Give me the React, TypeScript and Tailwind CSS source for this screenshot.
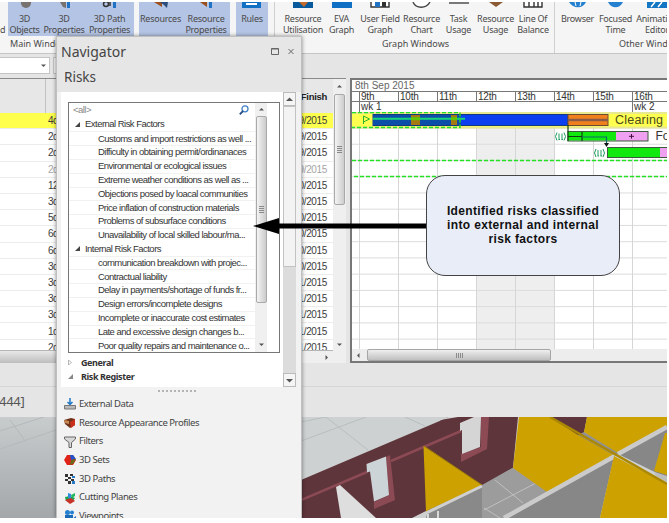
import React from 'react';
import clsx from 'clsx';

interface RibbonItem {
  lines: string[];
  width: string;
  icon?: React.ReactNode;
}

const durations = ['4d', '2d', '2d', '2d', '12d', '3d', '5d', '6d', '6d', '3d', '3d', '3d', '3d', '1d', '2d'];
const finishes = ['09', '09', '09', '09', '10', '10', '10', '10', '10', '10', '11', '11', '11', '11', '11'];
const days = ['9th', '10th', '11th', '12th', '13th', '14th', '15th', '16th'];

const externalRisks = [
  'Customs and import restrictions as well ...',
  'Difficulty in obtaining permit/ordinanaces',
  'Environmental or ecological issues',
  'Extreme weather conditions as well as ...',
  'Objections posed by loacal communities',
  'Price inflation of construction materials',
  'Problems of subsurface conditions',
  'Unavailability of local skilled labour/ma...',
];

const internalRisks = [
  'communication breakdown with projec...',
  'Contractual liability',
  'Delay in payments/shortage of funds fr...',
  'Design errors/incomplete designs',
  'Incomplete or inaccurate cost estimates',
  'Late and excessive design changes b...',
  'Poor quality repairs and maintenance o...',
];

// Only the bottom few pixels of the ribbon icons are visible
const Stub = ({ children }: { children: React.ReactNode }) => (
  <svg className="h-[6px] w-[22px]" viewBox="0 0 22 6">{children}</svg>
);

const view3d: RibbonItem[] = [
  { lines: ['3D', 'Objects'], width: 'w-[33px]', icon: <Stub><circle cx="12" cy="1" r="5" fill="#77716f" /></Stub> },
  { lines: ['3D', 'Properties'], width: 'w-[46px]', icon: <Stub><path d="M7 0h6v6l-3-1z" fill="#77716f" /><path d="M14 0h3v6h-3z" fill="#1f72c4" /></Stub> },
  { lines: ['3D Path', 'Properties'], width: 'w-[45px]', icon: <Stub><circle cx="7" cy="2" r="2.5" fill="none" stroke="#333" strokeWidth="1.5" /><path d="M11 0v4" stroke="#333" strokeWidth="1.5" /><path d="M14 0h3v6h-3z" fill="#1f72c4" /></Stub> },
];

const viewResources: RibbonItem[] = [
  { lines: ['Resources'], width: 'w-[43px]', icon: <Stub><path d="M4 0h8v5z" fill="#9a4f1e" /><path d="M10 0l8 0-1 6-3-3z" fill="#2a4d7c" /></Stub> },
  { lines: ['Resource', 'Properties'], width: 'w-[48px]', icon: <Stub><path d="M5 0h7v5z" fill="#9a4f1e" /><path d="M14 0h3v6h-3z" fill="#1f72c4" /></Stub> },
];

const graphItems: RibbonItem[] = [
  { lines: ['Resource', 'Utilisation'], width: 'w-[44px]', icon: <Stub><path d="M1 0h20v6H1z" fill="#075a9c" /><path d="M7 0h9l-4 5z" fill="#c46b2c" /></Stub> },
  { lines: ['EVA', 'Graph'], width: 'w-[33px]', icon: <Stub><path d="M1 0h20v6H1z" fill="#0f70c4" /></Stub> },
  { lines: ['User Field', 'Graph'], width: 'w-[44px]', icon: <Stub><path d="M2 0v5h18V0" fill="#fff" stroke="#333" strokeWidth="1.4" /><path d="M6 0h5v5H6z" fill="#1f72c4" /><path d="M13 0h4v5h-4z" fill="#333" /></Stub> },
  { lines: ['Resource', 'Chart'], width: 'w-[39px]', icon: <Stub><path d="M2 0c3 7 13 7 17 0" fill="#fff" stroke="#444" strokeWidth="1.4" /></Stub> },
  { lines: ['Task', 'Usage'], width: 'w-[35px]', icon: <Stub><path d="M1 1h20" stroke="#444" strokeWidth="1.4" /></Stub> },
  { lines: ['Resource', 'Usage'], width: 'w-[39px]', icon: <Stub><path d="M4 0h14l-7 5z" fill="#8b5a35" /></Stub> },
  { lines: ['Line Of', 'Balance'], width: 'w-[36px]', icon: <Stub><path d="M2 0v5h18V0M7 0v5M12 0v5M16 0v5" fill="#fff" stroke="#333" strokeWidth="1.4" /></Stub> },
];

const otherItems: RibbonItem[] = [
  { lines: ['Browser'], width: 'w-[37px]', icon: <Stub><path d="M2 0h17c-3 7-13 7-17 0z" fill="#2581cf" /><path d="M8 0l1 4M14 0l-1 4" stroke="#fff" /></Stub> },
  { lines: ['Focused', 'Time'], width: 'w-[39px]', icon: <Stub><path d="M3 0h15c-3 7-12 7-15 0z" fill="#2581cf" /></Stub> },
  { lines: ['Animation', 'Editor'], width: 'w-[44px]', icon: <Stub><path d="M1 0h21v6H1z" fill="#1377c4" /><path d="M5 5l4-5M12 5l4-5" stroke="#fff" strokeWidth="1.5" /></Stub> },
];

const RibbonButtons = ({ items }: { items: RibbonItem[] }) => (
  <>
    {items.map((item, index) => (
      <div key={index} className={clsx('flex shrink-0 flex-col items-center whitespace-nowrap', item.width)}>
        {item.icon}
        <div className="mt-[6px] text-center text-[9px] leading-[10.5px] tracking-[-0.25px]">
          {item.lines.map((line) => (
            <div key={line} className="flex justify-center">{line}</div>
          ))}
        </div>
      </div>
    ))}
  </>
);

const Ribbon = () => (
  <div className="flex h-[52px] shrink-0 overflow-hidden border-b border-[#c6c6c6] bg-[#f5f5f5] text-[#4a4a4a]">
    <div className="flex w-[275px] shrink-0 flex-col border-r border-[#cfcfcf]">
      <div className="flex h-[34px]">
        <div className="flex w-[8px] items-start pt-[22px] text-[9px] leading-[11px]">d</div>
        <div className="flex w-[126px] bg-[#b4c4e4]"><RibbonButtons items={view3d} /></div>
        <div className="ml-[5px] flex w-[91px] bg-[#b4c4e4]"><RibbonButtons items={viewResources} /></div>
        <div className="ml-[6px] flex w-[32px] justify-center bg-[#b4c4e4]">
          <RibbonButtons
            items={[{ lines: ['Rules'], width: 'w-[32px]', icon: <Stub><path d="M1 0h19v6H1z" fill="#0f70c4" /><path d="M5 2h11" stroke="#fff" strokeWidth="2" /></Stub> }]}
          />
        </div>
      </div>
      <div className="pl-[10px] pt-[2px] text-[9px] leading-[12px]">Main Windows</div>
    </div>
    <div className="flex w-[280px] shrink-0 flex-col border-r border-[#cfcfcf]">
      <div className="flex h-[34px] pl-[6px]"><RibbonButtons items={graphItems} /></div>
      <div className="pl-[107px] pt-[2px] text-[9px] leading-[12px]">Graph Windows</div>
    </div>
    <div className="flex flex-col">
      <div className="flex h-[34px] pl-[4px]"><RibbonButtons items={otherItems} /></div>
      <div className="whitespace-nowrap pl-[64px] pt-[2px] text-[9px] leading-[12px]">Other Windows</div>
    </div>
  </div>
);

const Toolbar = () => (
  <div className="flex h-[24px] shrink-0 items-start bg-[#e5e5e5] pt-[3px]">
    <div className="flex h-[17px] w-[50px] items-center justify-end border border-l-0 border-[#c4c4c4] bg-white pr-[3px]">
      <Arrow dir="down" size={5} />
    </div>
    <div className="ml-[3px] h-[17px] w-[12px] border border-[#c4c4c4] bg-[#f2f2f2]" />
  </div>
);

const Arrow = ({ dir, size = 5 }: { dir: 'up' | 'down' | 'left' | 'right'; size?: number }) => {
  const paths = {
    up: 'M0 7L5 2l5 5z',
    down: 'M0 3l5 5 5-5z',
    left: 'M7 0L2 5l5 5z',
    right: 'M3 0l5 5-5 5z',
  };
  return <svg width={size} height={size} viewBox="0 0 10 10"><path d={paths[dir]} fill="#555" /></svg>;
};

const Grip = () => (
  <div className="flex flex-col gap-[1px]">
    {[0, 1, 2, 3].map((i) => <div key={i} className="h-[1px] w-[5px] bg-[#8a8a8a]" />)}
  </div>
);

const TaskTable = () => (
  <div className="flex h-[285px] w-[346px] shrink-0 border-t border-[#8a8a8a] bg-white font-['Liberation_Sans'] text-[10px] text-[#3c3c3c]">
    <div className="flex w-[333px] flex-col">
      <div className="flex h-[34px] shrink-0 bg-[#e7e7e7]">
        <div className="w-[46px] border-r border-[#c2c2c2]" />
        <div className="flex-1 pr-[6px] pt-[12px] text-right text-[9.5px] font-bold leading-[12px] tracking-[-0.3px] text-[#222]">Finish</div>
      </div>
      <div className="h-[237px] overflow-hidden">
        {durations.map((duration, index) => (
          <div
            key={index}
            className={clsx(
              'flex h-[16.2px] items-center justify-between border-b border-[#ececec] pl-[48px] pr-[6px]',
              index === 0 && 'bg-[#ffff4d]',
              index === 3 && 'text-[#a5a5a5]',
            )}
          >
            <span className="tracking-[-0.5px]">{duration}</span>
            <span className="text-[10px] tracking-[-0.35px]">{`12/${finishes[index]}/2015`}</span>
          </div>
        ))}
      </div>
      <div className="flex flex-1 items-center justify-between border-t border-[#b5b5b5] bg-[#efefef]">
        <div className="h-full w-[60px] bg-gradient-to-b from-[#e8e8e8] to-[#bdbdbd]" />
        <div className="pr-[4px]"><Arrow dir="right" /></div>
      </div>
    </div>
    <div className="flex flex-1 flex-col items-center bg-[#efefef]">
      <div className="flex h-[15px] items-center"><Arrow dir="up" /></div>
      <div className="flex h-[111px] w-[11px] items-center justify-center rounded-[2px] border border-[#a9a9a9] bg-gradient-to-r from-[#f4f4f4] to-[#cdcdcd]">
        <Grip />
      </div>
      <div className="flex flex-1 items-end pb-[16px]"><Arrow dir="down" /></div>
    </div>
  </div>
);

const GanttBody = () => {
  const columns = days.map((_, i) => 359.5 + i * 39);
  const rows = Array.from({ length: 14 }, (_, i) => 128 + i * 16.24);
  return (
    <svg className="h-[237px] w-[315px] shrink-0" viewBox="352 112 315 237">
      <rect x="352" y="112" width="315" height="237" fill="#fff" />
      <rect x="476.5" y="112" width="78" height="237" fill="#eee" />
      {rows.map((y) => <path key={y} d={`M352 ${y}H667`} stroke="#dcdcdc" />)}
      {columns.map((x) => <path key={x} d={`M${x} 112V349`} stroke="#d6d6d6" />)}
      <rect x="352" y="112" width="315" height="16" fill="#ffff50" />
      <path d="M352 127.5H667M352 113H667" stroke="#e7e890" strokeWidth="2" />
      {/* clearing task */}
      <rect x="373" y="114.5" width="195" height="11" fill="#0b3ff0" stroke="#123a80" />
      <rect x="373" y="115" width="88" height="10" fill="#0b4fa8" />
      <rect x="411" y="115" width="9" height="10" fill="#a57a12" />
      <rect x="451" y="115" width="6" height="10" fill="#a57a12" />
      <path d="M373 118.7H465" stroke="#16d47c" strokeWidth="2" />
      <path d="M411 118.7H420M451 118.7H457" stroke="#62c400" strokeWidth="3" />
      <rect x="568" y="114.5" width="40" height="11" fill="#f0801c" stroke="#6d4a32" />
      <path d="M568 120H608" stroke="#8a5a48" strokeWidth="2.5" />
      <path d="M363.5 124v-8l6 3-6 3" fill="none" stroke="#2bb52b" />
      <path d="M352 112.5H460V127.5H352" fill="none" stroke="#22e022" strokeWidth="1.4" strokeDasharray="4 2" />
      <text x="615" y="124" fontFamily="Liberation Sans" fontSize="12.5" fill="#4a4a1c" textLength="48">Clearing</text>
      {/* foundation task */}
      <rect x="568" y="131.5" width="80" height="9.5" fill="#f0a0f0" stroke="#3b5b3b" />
      <rect x="568" y="132" width="48" height="8.5" fill="#10e810" />
      <path d="M568 125v11.5H582M582 132v9M568 131.5v9.5" fill="none" stroke="#104010" strokeWidth="1.2" />
      <path d="M582 137H606.5V145" fill="none" stroke="#0b6a6a" strokeWidth="1.2" />
      <path d="M604 143h5l-2.5 4z" fill="#111" />
      <path d="M629 136.3h5M631.5 134v4.6" stroke="#401040" />
      <text x="655.5" y="140" fontFamily="Liberation Sans" fontSize="12" fill="#333">Foundation</text>
      {/* following task */}
      <rect x="607.5" y="147.5" width="62" height="10" fill="#f0a0f0" stroke="#3b5b3b" />
      <rect x="608" y="148" width="52" height="9" fill="#10e810" />
      {[[555, 136.5], [594, 153]].map(([x, y]) => (
        <g key={x} fill="none" stroke="#1f9d5c">
          <path d={`M${x + 2} ${y - 4}q-3 4 0 8M${x + 9} ${y - 4}q3 4 0 8M${x + 4} ${y - 3}v6M${x + 7} ${y - 3}v6M${x + 5} ${y + 3}h-1.5M${x + 8} ${y + 3}h-1.5`} />
        </g>
      ))}
      <path d="M352 160.4H667M354 176.4H667" stroke="#22e022" strokeWidth="1.5" strokeDasharray="4 2" />
    </svg>
  );
};

const Gantt = () => (
  <div className="ml-[4px] flex h-[285px] flex-1 flex-col overflow-hidden border-b-2 border-l-2 border-t-2 border-[#777] bg-white font-['Liberation_Sans'] text-[10px] leading-[11px] text-[#333]">
    <div className="h-[11px] shrink-0 pl-[3px] text-[10px] text-[#666]">8th Sep 2015</div>
    <div className="flex h-[11px] shrink-0 border-y border-[#777] pl-[7px] tracking-[-0.2px]">
      {days.map((day) => (
        <div key={day} className="w-[39px] shrink-0 border-l border-[#777] pl-[1px] leading-[10px]">{day}</div>
      ))}
    </div>
    <div className="flex h-[10px] shrink-0 pl-[7px] leading-[10px]">
      <div className="w-[273px] shrink-0 border-l border-[#777] pl-[1px]">wk 1</div>
      <div className="shrink-0 border-l border-[#777] pl-[1px]">wk 2</div>
    </div>
    <GanttBody />
    <div className="flex h-[12px] shrink-0 items-center bg-[#ededed] pl-[4px]">
      <Arrow dir="left" />
      <div className="ml-[6px] flex h-[12px] w-[184px] items-center justify-center rounded-[2px] border border-[#a6a6a6] bg-gradient-to-b from-[#efefef] to-[#bfbfbf]">
        <div className="rotate-90"><Grip /></div>
      </div>
    </div>
  </div>
);

const Scene = () => (
  <svg className="h-[101px] w-[366px] shrink-0" viewBox="301 417 366 101">
    <rect x="301" y="417" width="366" height="101" fill="#cdd1d1" />
    <path d="M301 441l65-24M326 417l42 33M301 422l25-5M405 417l20 9" stroke="#b9bebe" fill="none" />
    <path d="M301 480L449 417H518L513 468L482 486L424 512L412 518H301z" fill="#5e353b" />
    <path d="M440 421l8-4h26l-16 5-18 8z" fill="#5e353b" />
    <path d="M440 420l8-3h10z" fill="#d4d8d8" />
    <path d="M301 500l66-28M391 461l70-30" stroke="#8b4a54" strokeWidth="2.5" />
    <path d="M386 457l4-2 5 45-21 9v-7l15-7z" fill="#8b4a54" />
    <path d="M366.5 464l19.5-7.5 3 38.5-15 6.5-4-30-3 1z" fill="#cdd4d8" />
    <path d="M481 417h8l-2 32-26 13v-8l20-7z" fill="#8b4a54" />
    <path d="M460 423l14-6h7l-1 30-18 7v-24l-2 1z" fill="#d5d5d5" />
    <path d="M336 487l4-2 36 33h-35z" fill="#dedede" />
    <path d="M423.5 446L482 485l-56 27z" fill="#cda200" />
    <path d="M424 446l58 39" stroke="#9c7c08" />
    <path d="M482 486v32h-56l2-8z" fill="#898989" />
    <path d="M482 485l32-18 34 24-40 27h-26z" fill="#9c9c9c" />
    <path d="M495 480l28 23M536 483l-52 27M484 508l16 10" stroke="#bfbfbf" fill="none" />
    <path d="M418 517l64-31" stroke="#d0d0d0" strokeWidth="3" />
    <path d="M428 514v4M438 511v7" stroke="#d8d8d8" strokeWidth="2" />
    <path d="M519 417h31l65 38-68 37-34-24z" fill="#cda200" />
    <path d="M550 417h37l-3 16-6 2z" fill="#5e353b" />
    <path d="M584 432l36 20-5 4-37-21z" fill="#919191" />
    <path d="M587 417h80v10l-49 26-34-21z" fill="#cda200" />
    <path d="M614 457l-106 61h92z" fill="#878787" />
    <path d="M620 455l47-27v50z" fill="#878787" />
    <path d="M665 433h2v42l-13-4z" fill="#cda200" />
    <path d="M654 472l13 4v6l-11-6z" fill="#bdbdbd" />
    <path d="M504 518l111-62M618 454l49-27" stroke="#cbcbcb" strokeWidth="4.5" />
    <path d="M614 456l53 28v34h-67z" fill="#cda200" />
    <path d="M550 417l117 67" stroke="#ab8804" strokeWidth="2.5" />
  </svg>
);

const TreeRow = ({ text, parent }: { text: string; parent?: boolean }) => (
  <div className={clsx('flex h-[13.8px] items-center whitespace-nowrap', parent ? 'pl-[6px]' : 'border-t border-[#f1f1f1] pl-[29px]')}>
    {parent && <svg className="mr-[5px] h-[5px] w-[5px]" viewBox="0 0 5 5"><path d="M5 0v5H0z" fill="#444" /></svg>}
    {text}
  </div>
);

const RiskTree = () => (
  <div className="flex h-[251px] w-[212px] border border-[#777] bg-white font-['Liberation_Sans'] text-[9.5px] tracking-[-0.53px] text-[#333]">
    <div className="w-[186px] overflow-hidden">
      <div className="flex h-[14.6px] items-center justify-between pl-[4px] pr-[6px] text-[#8a8a8a]">
        <span>&lt;all&gt;</span>
        <svg className="h-[10px] w-[10px]" viewBox="0 0 10 10" fill="none">
          <circle cx="6" cy="3.8" r="3" stroke="#3d7fc8" strokeWidth="1.3" />
          <path d="M4 6L.8 9.3" stroke="#274f86" strokeWidth="1.8" />
        </svg>
      </div>
      <TreeRow text="External Risk Factors" parent />
      {externalRisks.map((risk) => <TreeRow key={risk} text={risk} />)}
      <TreeRow text="Internal Risk Factors" parent />
      {internalRisks.map((risk) => <TreeRow key={risk} text={risk} />)}
    </div>
    <div className="flex w-[12px] flex-col items-center bg-[#f0f0f0]">
      <div className="flex h-[13px] items-center"><Arrow dir="up" /></div>
      <div className="flex h-[187px] w-[11px] items-center justify-center rounded-[2px] border border-[#a9a9a9] bg-gradient-to-r from-[#f4f4f4] to-[#cbcbcb]">
        <Grip />
      </div>
      <div className="flex flex-1 items-end pb-[5px]"><Arrow dir="down" /></div>
    </div>
  </div>
);

const navItems = [
  {
    label: 'External Data',
    icon: <><path d="M6 0v6M3.5 4L6 6.5 8.5 4" stroke="#1f78c8" strokeWidth="1.5" fill="none" /><path d="M.5 7.5h11v3.5H.5z" fill="#b9b9b9" stroke="#777" /></>,
  },
  {
    label: 'Resource Appearance Profiles',
    icon: <><path d="M0 3l7-2 4 1v6l-5 3-5-4z" fill="#6e3218" /><path d="M0 3l5 1v3L1 6z" fill="#c88a55" /><path d="M6 5l5-3v6l-4 3z" fill="#c8301c" /></>,
  },
  {
    label: 'Filters',
    icon: <path d="M.5 1h11v2L7.5 6.5v5H5v-5L.5 3z" fill="#d8d8d8" stroke="#666" />,
  },
  {
    label: '3D Sets',
    icon: <><path d="M3 1h6l3 5-3 5H3L0 6z" fill="#e02318" /><path d="M6 1h3l3 4-5 1z" fill="#2452c8" /><path d="M7 6l5-1-3 5-3 1z" fill="#6c6a18" /></>,
  },
  {
    label: '3D Paths',
    icon: <><path d="M1 1h3v3H1zM6 1h3v2H6zM4 4h3v2H4zM1 6h3v2H1zM7 6h3v2H7zM4 8h3v3H4z" fill="#333" /><path d="M8 8h3v3H8zM8 3h3v2H8z" fill="#2a7ac8" /></>,
  },
  {
    label: 'Cutting Planes',
    icon: <><path d="M1 5l5-1 5 2-3 4-6-1z" fill="#17a64a" /><path d="M4 1l3 1v5L4 6z" fill="#2d8ae0" /><path d="M1 8l6-2 4 3-5 3z" fill="#c8322a" /><path d="M7 3l4-2v3L8 6z" fill="#23b860" /></>,
  },
  {
    label: 'Viewpoints',
    icon: <><circle cx="3.5" cy="2.5" r="2.5" fill="#2581cf" /><circle cx="8" cy="2.5" r="2" fill="#2581cf" /><path d="M1 5h8v6H1zM9.5 8L12 6v5z" fill="#1a6ab8" /></>,
  },
];

const Navigator = () => (
  <div className="absolute left-[56px] top-[34px] flex h-[482px] w-[246px] flex-col overflow-hidden border-x border-t border-[#c0c0c0] bg-[#f2f2f2] shadow-[0_0_4px_rgba(0,0,0,0.45)]">
    <div className="h-[55px] shrink-0 bg-[#e6e6e6] text-[#444]">
      <div className="flex h-[28px] items-center justify-between pl-[4px] pr-[6px]">
        <span className="text-[14px] leading-[27px]">Navigator</span>
        <svg className="h-[9px] w-[24px]" viewBox="0 0 24 9" fill="none" stroke="#666">
          <path d="M.5 1.5h7v6h-7zM.5 2h7M17.5 2l5 5M22.5 2l-5 5" />
        </svg>
      </div>
      <div className="pl-[7px] text-[13.5px] leading-[25px]">Risks</div>
    </div>
    <div className="ml-[4px] mr-[5px] flex h-[295px] shrink-0">
      <div className="flex w-[222px] flex-col bg-white pl-[7px] pt-[10px]">
        <RiskTree />
        <div className="mt-[2px] flex h-[14.5px] items-center text-[9px] font-bold tracking-[-0.4px] text-[#333]">
          <svg className="mr-[8px] h-[5px] w-[5px]" viewBox="0 0 5 5"><path d="M.5 0v5l3-2.5z" fill="none" stroke="#999" strokeWidth=".7" /></svg>
          General
        </div>
        <div className="flex h-[14.5px] items-center text-[9px] font-bold tracking-[-0.4px] text-[#333]">
          <svg className="mr-[8px] h-[5px] w-[5px]" viewBox="0 0 5 5"><path d="M5 0v5H0z" fill="#888" /></svg>
          Risk Register
        </div>
      </div>
      <div className="flex flex-1 flex-col bg-[#dcdcdc]">
        <div className="flex h-[14px] items-center justify-center border border-[#bbb] bg-[#f5f5f5]"><Arrow dir="up" size={7} /></div>
        <div className="h-[161px] border border-[#c2c2c2] bg-[#f3f3f3]" />
        <div className="flex-1" />
        <div className="flex h-[14px] items-center justify-center border border-[#bbb] bg-[#f5f5f5]"><Arrow dir="down" size={7} /></div>
      </div>
    </div>
    <div className="flex h-[8px] shrink-0 items-center justify-center gap-[2px] pr-[4px]">
      {Array.from({ length: 10 }, (_, i) => <div key={i} className="h-[2px] w-[2px] bg-[#b3b3b3]" />)}
    </div>
    {navItems.map((item) => (
      <div key={item.label} className="flex h-[18.65px] shrink-0 items-center pl-[7px] text-[9.5px] tracking-[-0.45px] text-[#444]">
        <svg className="mr-[3px] h-[12px] w-[12px]" viewBox="0 0 12 12">{item.icon}</svg>
        {item.label}
      </div>
    ))}
  </div>
);

const App: React.FC = () => {
  return (
    <div className="h-[523px] w-[669px] overflow-hidden bg-white pt-[2px] font-['Noto_Sans',sans-serif]">
      <div className="relative flex h-[516px] w-[667px] flex-col overflow-hidden bg-[#e5e5e5]">
        <Ribbon />
        <Toolbar />
        <div className="flex shrink-0">
          <TaskTable />
          <Gantt />
        </div>
        <div className="mt-[1px] h-[23px] shrink-0 border-b border-[#d6d6d6]" />
        <div className="flex h-[30px] shrink-0 items-center text-[13px] text-[#555]">
          <span className="-ml-[1px] tracking-[-0.3px]">444]</span>
        </div>
        <div className="flex shrink-0">
          <svg className="h-[101px] w-[56px] bg-gradient-to-b from-[#c9cccd] to-[#a3a7a9]" viewBox="0 0 56 101" fill="none" stroke="#b5b9ba">
            <path d="M0 14L44 0M10 3l16 22M0 32l56-19" />
          </svg>
          <div className="w-[245px]" />
          <Scene />
        </div>

        <Navigator />

        <svg className="absolute left-[252px] top-[215px] h-[18px] w-[176px]" viewBox="0 0 176 18">
          <path d="M1 9L27 1v5.5h149v5H27V17z" fill="#000" />
        </svg>
        <div className="absolute left-[426px] top-[172.5px] flex h-[101px] w-[194px] items-center justify-center whitespace-nowrap rounded-[19px] border border-[#444] bg-[#e8edf8] text-center font-['Liberation_Sans'] text-[12px] font-bold leading-[14.3px] tracking-[0.35px] text-[#111]">
          <div>
            <div>Identified risks classified</div>
            <div>into external and internal</div>
            <div>risk factors</div>
          </div>
        </div>
      </div>
    </div>
  );
};

export default App;
